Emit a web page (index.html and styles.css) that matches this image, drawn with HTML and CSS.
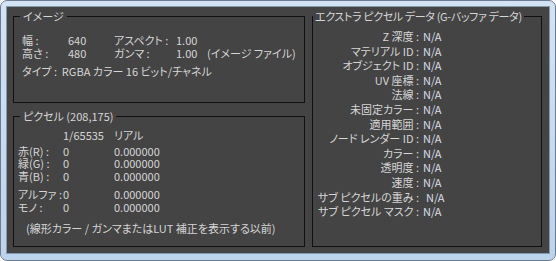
FILE: index.html
```html
<!DOCTYPE html>
<html>
  <head>
    <meta charset="UTF-8"/>
    <title>ピクセル情報</title>
    <link rel="stylesheet" href="styles.css">
  </head>
  <body>
    <div class="window">
      <div class="panel">
        <div class="left">
          <div class="group image">
            <div class="title">イメージ</div>
            <div class="info">
              <span>幅 :</span><span>640</span><span>アスペクト :</span><span>1.00</span><span></span>
              <span>高さ :</span><span>480</span><span>ガンマ :</span><span>1.00</span><span>(イメージ ファイル)</span>
            </div>
            <div class="type">タイプ :&nbsp; RGBA カラー 16 ビット/チャネル</div>
          </div>
          <div class="group pixel">
            <div class="title">ピクセル (208,175)</div>
            <div class="chan head">
              <span></span><span>1/65535</span><span>リアル</span>
            </div>
            <div class="chan">
              <span>赤(R) :</span><span>0</span><span>0.000000</span>
              <span>緑(G) :</span><span>0</span><span>0.000000</span>
              <span>青(B) :</span><span>0</span><span>0.000000</span>
            </div>
            <div class="chan">
              <span>アルファ :</span><span>0</span><span>0.000000</span>
              <span>モノ :</span><span>0</span><span>0.000000</span>
            </div>
            <div class="note">(線形カラー / ガンマまたはLUT 補正を表示する以前)</div>
          </div>
        </div>
        <div class="group extra">
          <div class="title">エクストラ ピクセル データ (G-バッファ データ)</div>
          <div class="gbuf">
            <span>Z 深度 :</span><span>N/A</span>
            <span>マテリアル ID :</span><span>N/A</span>
            <span>オブジェクト ID :</span><span>N/A</span>
            <span>UV 座標 :</span><span>N/A</span>
            <span>法線 :</span><span>N/A</span>
            <span>未固定カラー :</span><span>N/A</span>
            <span>適用範囲 :</span><span>N/A</span>
            <span>ノード レンダー ID :</span><span>N/A</span>
            <span>カラー :</span><span>N/A</span>
            <span>透明度 :</span><span>N/A</span>
            <span>速度 :</span><span>N/A</span>
            <span>サブ ピクセルの重み :</span><span class="shift">N/A</span>
            <span>サブ ピクセル マスク :</span><span>N/A</span>
          </div>
        </div>
      </div>
    </div>
  </body>
</html>
```
FILE: styles.css
```css
body {
  margin: 0;
  font-family: "Noto Sans CJK JP", "Noto Sans", sans-serif;
  font-size: 11px;
  font-feature-settings: "palt";
  color: #d6d6d6;
}

.window {
  width: 556px;
  height: 261px;
  box-sizing: border-box;
  border: 1px solid #6b7c8f;
  border-radius: 7px;
  background: linear-gradient(#d4e3f3, #bcd3ec);
  padding: 5px 5px 6px 5px;
}

.panel {
  height: 100%;
  box-sizing: border-box;
  border: 1px solid #8499af;
  background-color: #444;
  padding: 9px 7px 6px 6px;
  display: flex;
  gap: 7px;
}

.left {
  width: 292px;
  display: flex;
  flex-direction: column;
  gap: 13px;
}

.group {
  border: 1px solid #111;
  box-sizing: border-box;
}

.title {
  display: table;
  margin: -8px 0 0 6px;
  padding: 0 3px;
  line-height: 14px;
  background-color: #444;
  white-space: nowrap;
}

.image {
  height: 87px;
}

.pixel {
  height: 131px;
}

.extra {
  width: 230px;
  height: 231px;
}

.extra .title {
  margin-left: 0;
  padding: 0 2px;
  letter-spacing: -0.35px;
}

.info {
  display: grid;
  grid-template-columns: 46px 46px 62px 31px auto;
  line-height: 12.5px;
  margin: 11px 0 0 8px;
  white-space: nowrap;
}

.type {
  margin: 6px 0 0 8px;
  line-height: 12.5px;
}

.chan {
  display: grid;
  grid-template-columns: 45px 51px auto;
  line-height: 12.5px;
  margin: 4px 0 0 4px;
  white-space: nowrap;
}

.chan.head {
  margin-top: 6px;
}

.chan + .chan {
  margin-top: 6px;
}

.chan.head + .chan {
  margin-top: 3px;
}

.note {
  margin: 9px 0 0 12px;
  line-height: 12.5px;
  white-space: nowrap;
}

.gbuf {
  display: grid;
  grid-template-columns: 106px auto;
  column-gap: 4px;
  line-height: 14.6px;
  margin-top: 6px;
  white-space: nowrap;
}

.gbuf span:nth-child(odd) {
  text-align: right;
}

.gbuf span:nth-child(even) {
  color: #d8dde8;
}

.gbuf .shift {
  padding-left: 3px;
}
```
